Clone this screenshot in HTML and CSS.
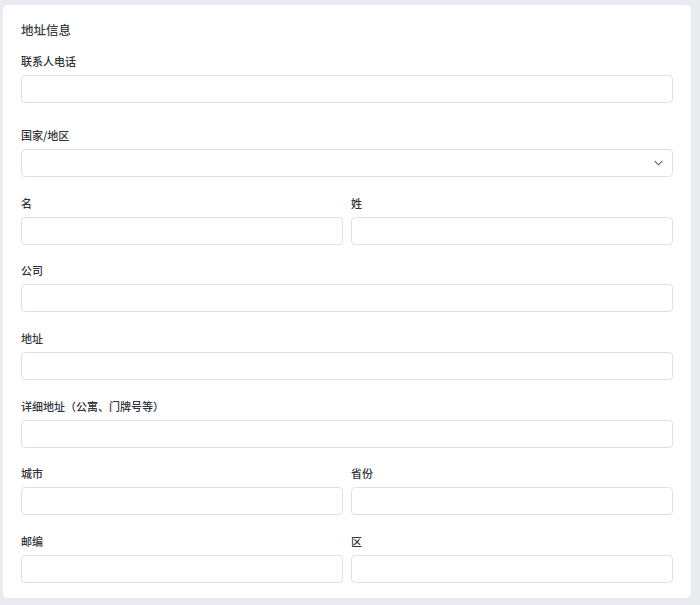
FILE: index.html
```html
<!DOCTYPE html>
<html lang="zh-CN">
<head>
<meta charset="utf-8">
<title>地址信息</title>
<link rel="stylesheet" href="styles.css">
</head>
<body>
<form class="card">
  <h2 class="card-title">地址信息</h2>

  <div class="field field-phone">
    <label class="label" for="phone">联系人电话</label>
    <input class="input" id="phone" type="tel">
  </div>

  <div class="field">
    <label class="label" for="country">国家/地区</label>
    <div class="select-wrap">
      <select class="input select" id="country">
        <option></option>
      </select>
      <svg class="chevron" viewBox="0 0 10 6" width="9" height="6" aria-hidden="true">
        <path d="M1 1l4 4 4-4" fill="none" stroke="#5b616b" stroke-width="1.2" stroke-linecap="round" stroke-linejoin="round"/>
      </svg>
    </div>
  </div>

  <div class="row">
    <div class="field">
      <label class="label" for="first">名</label>
      <input class="input" id="first" type="text">
    </div>
    <div class="field">
      <label class="label" for="last">姓</label>
      <input class="input" id="last" type="text">
    </div>
  </div>

  <div class="field">
    <label class="label" for="company">公司</label>
    <input class="input" id="company" type="text">
  </div>

  <div class="field">
    <label class="label" for="address">地址</label>
    <input class="input" id="address" type="text">
  </div>

  <div class="field">
    <label class="label" for="address2">详细地址（公寓、门牌号等）</label>
    <input class="input" id="address2" type="text">
  </div>

  <div class="row">
    <div class="field">
      <label class="label" for="city">城市</label>
      <input class="input" id="city" type="text">
    </div>
    <div class="field">
      <label class="label" for="province">省份</label>
      <input class="input" id="province" type="text">
    </div>
  </div>

  <div class="row">
    <div class="field">
      <label class="label" for="zip">邮编</label>
      <input class="input" id="zip" type="text">
    </div>
    <div class="field">
      <label class="label" for="district">区</label>
      <input class="input" id="district" type="text">
    </div>
  </div>
</form>
</body>
</html>
```

FILE: styles.css
```css
* {
  box-sizing: border-box;
}

html,
body {
  margin: 0;
  padding: 0;
}

body {
  background: #e9ebf0;
  font-family: "Noto Sans CJK SC", "Noto Sans", "Liberation Sans", sans-serif;
  color: #333842;
  padding: 5px 9px 8px 3px;
}

.card {
  background: #ffffff;
  border-radius: 5px;
  padding: 18px 18px 15px;
  display: flex;
  flex-direction: column;
  gap: 17.7px;
}

.card-title {
  margin: 0 0 -1.7px;
  font-size: 12.5px;
  line-height: 14px;
  font-weight: 500;
  color: #3a3f48;
}

.field {
  display: flex;
  flex-direction: column;
  gap: 6px;
  min-width: 0;
}

.field-phone {
  margin-bottom: 6.3px;
}

.label {
  font-size: 11px;
  line-height: 16px;
  font-weight: 500;
  color: #2f333a;
}

.input {
  display: block;
  width: 100%;
  height: 28px;
  margin: 0;
  padding: 0 10px;
  border: 1px solid #dfe1e5;
  border-radius: 4px;
  background: #ffffff;
  font: inherit;
  font-size: 12px;
  outline: none;
}

.select-wrap {
  position: relative;
}

.select {
  appearance: none;
  -webkit-appearance: none;
}

.chevron {
  position: absolute;
  right: 10px;
  top: 11px;
  pointer-events: none;
}

.row {
  display: grid;
  grid-template-columns: 1fr 1fr;
  gap: 8px;
}
```
